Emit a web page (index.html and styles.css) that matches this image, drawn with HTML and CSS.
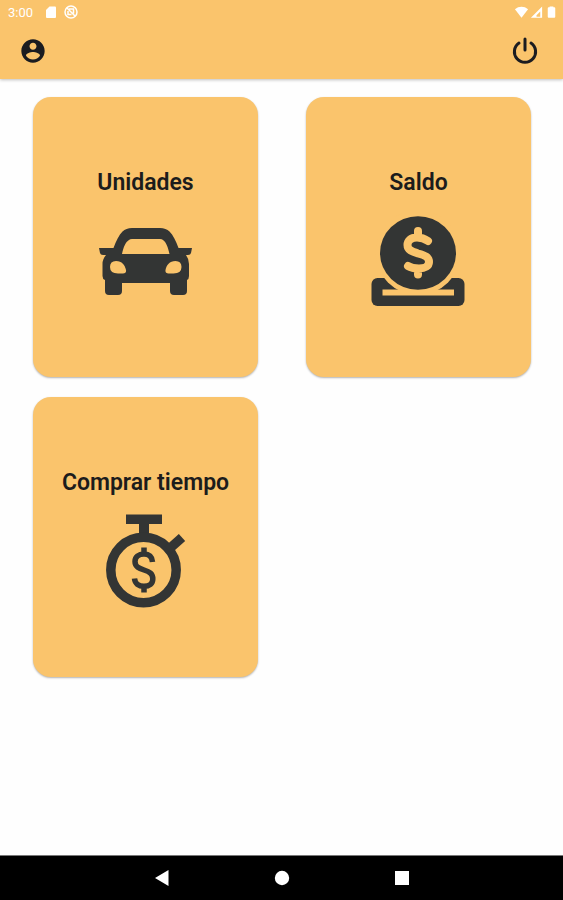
FILE: index.html
```
<!DOCTYPE html>
<html lang="es">
<head>
    <meta charset="UTF-8">
    <meta name="viewport" content="width=device-width, initial-scale=1.0">
    <title>Menú principal</title>
    <link rel="stylesheet" href="styles.css">
</head>
<body>
    <header>
        <!-- Barra de estado -->
        <div class="status-bar">
            <span class="clock">3:00</span>
            <svg class="status-icon" viewBox="0 0 16 16"><path d="M6.500 2.500H12a1 1 0 0 1 1 1v9.500a1 1 0 0 1-1 1H4a1 1 0 0 1-1-1V6z"/></svg>
            <svg class="status-icon status-app" viewBox="0 0 16 16"><circle cx="8" cy="8" r="6"/><path d="M4 4l8 8M6 5h4.500v4.500M5 7v3.500h3.500"/></svg>
            <div class="status-right">
                <svg class="status-icon" viewBox="0 0 16 16"><path d="M1 5C5 1.500 11 1.500 15 5L8 14z"/></svg>
                <svg class="status-icon" viewBox="0 0 16 16"><path d="M14 2v12H2zM12 7.500l-4 4V13h4z" fill-rule="evenodd"/></svg>
                <svg class="status-icon" viewBox="0 0 16 16"><path d="M6 2h4v1h1a1 1 0 0 1 1 1v9a1 1 0 0 1-1 1H5a1 1 0 0 1-1-1V4a1 1 0 0 1 1-1h1z"/></svg>
            </div>
        </div>
        <div class="app-bar">
            <button type="button" class="icon-button" aria-label="Perfil">
                <svg viewBox="0 0 24 24"><path d="M12 2C6.480 2 2 6.480 2 12s4.480 10 10 10 10-4.480 10-10S17.520 2 12 2zm0 3c1.660 0 3 1.340 3 3s-1.340 3-3 3-3-1.340-3-3 1.340-3 3-3zm0 14.200c-2.500 0-4.710-1.280-6-3.220.030-1.990 4-3.080 6-3.080 1.990 0 5.970 1.090 6 3.080-1.290 1.940-3.500 3.220-6 3.220z"/></svg>
            </button>
            <button type="button" class="icon-button power" aria-label="Salir">
                <svg viewBox="0 0 28 28"><path d="M14 2v11M8 6a10.600 10.600 0 1 0 12 0"/></svg>
            </button>
        </div>
    </header>

    <main class="menu">
        <a href="#unidades" class="card">
            <h2>Unidades</h2>
            <svg class="card-icon" viewBox="0 0 96 96">
                <path fill-rule="evenodd" d="M1 35H15.500C18 28 21 22 24.500 18.500Q28 15 34 15H62Q68 15 71.500 18.500C75 22 78 28 80.500 35H94L93 40Q92.500 42 90 42H88Q91 46 91 51V63Q91 66 89 67V78Q89 82 85 82H76Q72 82 72 78V70H24V78Q24 82 20 82H11Q7 82 7 78V67Q4.500 66 4.500 63V51Q4.500 46 8 42H5Q2.500 42 2 40ZM24 41H71.500C70 34 68 29 65 27Q64 26 62 26H34Q32 26 31 27C27.500 29 25.500 34 24 41ZM12 54Q12 48 18 48C24 48 27 52 28 57Q28.500 60.500 25 60.500H20Q12 60.500 12 54ZM83.500 54Q83.500 48 77.500 48C71.500 48 68.500 52 67.500 57Q67 60.500 70.500 60.500H75.500Q83.500 60.500 83.500 54Z"/>
            </svg>
        </a>
        <a href="#saldo" class="card">
            <h2>Saldo</h2>
            <svg class="card-icon" viewBox="0 0 96 96">
                <rect x="0.500" y="65" width="93" height="28" rx="6"/>
                <circle class="hole" cx="47" cy="39.500" r="42.500"/>
                <path class="hole" d="M11.500 76.500h71.500v6h-71.500z"/>
                <ellipse cx="47" cy="40" rx="38" ry="36.700"/>
                <path class="coin-sign" d="M47 18v6M57 28Q52 24.500 46 24.500C39.500 24.500 36.500 28 36.500 32C36.500 37 41 38.500 47 40.500C54 42.300 58 44 58 49C58 53 54 55.500 48 55.500Q41 55.500 37 53M47 56v5.500"/>
            </svg>
        </a>
        <a href="#tiempo" class="card">
            <h2>Comprar tiempo</h2>
            <svg class="card-icon" viewBox="0 0 96 96">
                <path d="M28 1.500h36V11H51v12H41V11H28z"/>
                <circle class="watch-ring" cx="45.500" cy="57" r="32.700"/>
                <path class="watch-knob" d="M70 37L84 24.500"/>
                <path class="watch-sign" d="M46 34.500v6M54.500 49C54 43.500 51 41 46 41C40.500 41 37 44 37 48.500C37 54 41.500 55.500 46 57C51.500 58.800 54.800 60.500 54.800 66C54.800 70.500 51.500 73.300 46 73.300C40.500 73.300 37 70.500 36.500 65.500M46 73v6.500"/>
            </svg>
        </a>
    </main>

    <!-- Botones de navegación del sistema -->
    <nav class="system-nav">
        <button type="button" aria-label="Atrás"><svg viewBox="0 0 24 24"><path d="M18.500 4v16L5 12z"/></svg></button>
        <button type="button" aria-label="Inicio"><svg viewBox="0 0 24 24"><circle cx="12" cy="12" r="7.200"/></svg></button>
        <button type="button" aria-label="Recientes"><svg viewBox="0 0 24 24"><path d="M5 5h14v14H5z"/></svg></button>
    </nav>
</body>
</html>
```

FILE: styles.css
```
* {
    box-sizing: border-box;
}
body {
    font-family: Roboto, sans-serif;
    margin: 0;
    min-height: 100vh;
    display: flex;
    flex-direction: column;
    background-color: #fefefe;
    color: #1c1c1c;
}
svg {
    display: block;
}
button {
    padding: 0;
    border: 0;
    background: none;
    cursor: pointer;
}
header {
    background-color: #fac46c;
    box-shadow: 0 1px 3px rgba(0, 0, 0, 0.25);
}
.status-bar {
    display: flex;
    align-items: center;
    height: 24px;
    padding: 0 4px 0 8px;
    color: white;
}
.clock {
    font-size: 13px;
    margin-right: 10px;
}
.status-icon {
    width: 16px;
    height: 16px;
    fill: currentColor;
}
.status-app {
    margin-left: 4px;
    fill: none;
    stroke: currentColor;
    stroke-width: 1.5;
}
.status-right {
    display: flex;
    margin-left: auto;
}
.status-right .status-icon {
    width: 15px;
}
.app-bar {
    display: flex;
    justify-content: space-between;
    align-items: center;
    height: 55px;
    padding: 0 24px 2px 19px;
}
.icon-button svg {
    width: 28px;
    height: 28px;
    fill: #1b1c20;
}
.power svg {
    fill: none;
    stroke: #1b1c20;
    stroke-width: 3;
    stroke-linecap: round;
}
.menu {
    flex: 1;
    display: grid;
    grid-template-columns: 1fr 1fr;
    align-content: start;
    gap: 20px 48px;
    padding: 18px 32px 20px 33px;
}
.card {
    display: flex;
    flex-direction: column;
    align-items: center;
    padding: 72px 8px 68px;
    border-radius: 18px;
    background-color: #fac46c;
    box-shadow: 0 1px 2px rgba(0, 0, 0, 0.3);
    color: inherit;
    text-decoration: none;
}
.card h2 {
    margin: 0 0 16px;
    font-size: 23px;
    font-weight: 600;
    line-height: 28px;
    text-align: center;
}
.card-icon {
    width: 96px;
    height: 96px;
    fill: #333534;
}
.card-icon .hole {
    fill: #fac46c;
}
.coin-sign {
    fill: none;
    stroke: #fac46c;
    stroke-width: 8;
    stroke-linecap: round;
}
.watch-ring, .watch-knob, .watch-sign {
    fill: none;
    stroke: #333534;
    stroke-width: 9.5;
}
.watch-sign {
    stroke-width: 5.5;
}
.system-nav {
    display: flex;
    justify-content: center;
    align-items: center;
    gap: 96px;
    height: 45px;
    border-top: 1px solid #777;
    background-color: black;
}
.system-nav svg {
    width: 24px;
    height: 24px;
    fill: white;
}
```
